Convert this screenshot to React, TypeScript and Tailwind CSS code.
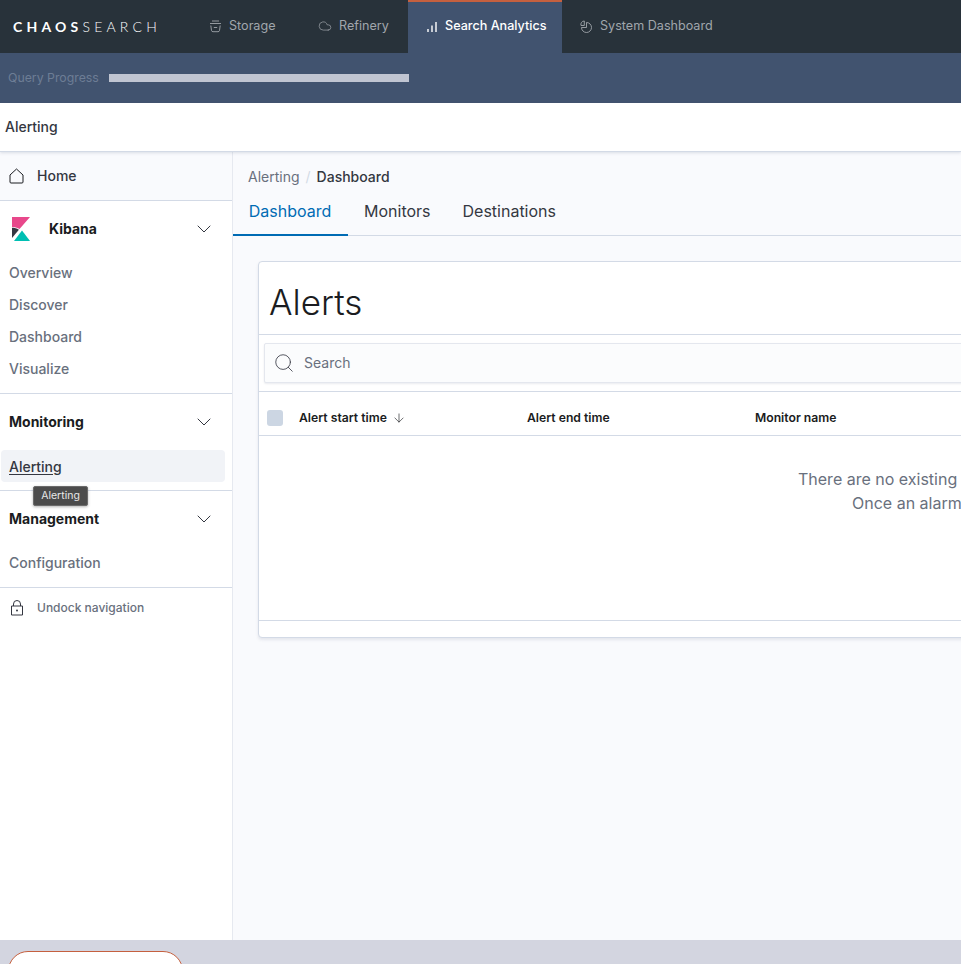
import type { ReactNode } from 'react';
import { ChevronDown, ArrowDown, Search, Cloud } from 'lucide-react';

function NavTab({ icon, label, active }: { icon: ReactNode; label: string; active?: boolean }) {
  return (
    <div
      className={`flex h-full items-center gap-[7px] text-[12.6px] ${
        active ? 'border-t-2 border-[#c5603f] bg-[#41536f] pb-[2px] font-medium text-white' : 'text-[#a0a6ac]'
      }`}
    >
      {icon}
      <span>{label}</span>
    </div>
  );
}

function Chevron() {
  return <ChevronDown className="h-6 w-6 text-[#343741]" strokeWidth={1} />;
}

function SideHeader({ label }: { label: string }) {
  return (
    <div className="flex h-[21px] items-center justify-between pl-[9px] pr-[16px] text-[14px] font-bold text-[#1a1c21]">
      <span>{label}</span>
      <Chevron />
    </div>
  );
}

function SideLink({ label }: { label: string }) {
  return <div className="flex h-8 items-center pl-[9px] text-[14px] font-medium text-[#69707d]">{label}</div>;
}

export default function App() {
  return (
    <div className="flex h-[964px] w-[961px] flex-col overflow-hidden bg-white font-['Inter',sans-serif]">
      <header className="h-[53px] shrink-0 bg-[#28323a]">
        <div className="flex h-full items-center">
          <div className="ml-[13px] w-[196px] whitespace-nowrap font-['Lato',sans-serif] text-[14px] tracking-[4.2px] text-white">
            <span className="font-bold">CHAOS</span>
            <span className="font-light">SEARCH</span>
          </div>
          <div className="w-[109px]">
            <NavTab
              label="Storage"
              icon={
                <svg width="13" height="13" viewBox="0 0 13 13" fill="none" stroke="currentColor" strokeWidth="0.9">
                  <path d="M3 1h7M1 3.5h11M1.8 5.5l.7 5a1.5 1.5 0 0 0 1.5 1.2h5a1.5 1.5 0 0 0 1.5-1.2l.7-5M4.8 7.5h3.4" />
                </svg>
              }
            />
          </div>
          <div className="w-[90px]">
            <NavTab label="Refinery" icon={<Cloud className="h-[14px] w-[14px]" strokeWidth={1.2} />} />
          </div>
          <div className="w-[154px] self-stretch">
            <NavTab
              active
              label="Search Analytics"
              icon={
                <span className="ml-[18px] flex h-[13px] w-[12px] items-center">
                  <svg width="12" height="13" viewBox="0 0 12 13" fill="none" stroke="currentColor" strokeWidth="1.4">
                    <path d="M2 12V9M6 12V5.5M10 12V2" />
                  </svg>
                </span>
              }
            />
          </div>
          <div className="ml-[18px]">
            <NavTab
              label="System Dashboard"
              icon={
                <svg width="13" height="13" viewBox="0 0 13 13" fill="none" stroke="currentColor" strokeWidth="0.9">
                  <path d="M6.5 2.5A5 5 0 1 1 1.5 7.5H6.5Z" />
                  <path d="M4.3 5.5H1A3.5 3.5 0 0 1 4.3 1Z" />
                </svg>
              }
            />
          </div>
        </div>
      </header>

      <div className="flex h-[50px] shrink-0 items-center bg-[#41536f] pl-2">
        <span className="w-[101px] text-[12.3px] text-[#6d7d95]">Query Progress</span>
        <div className="h-2 w-[300px] bg-[#c0c5d2]" />
      </div>

      <div className="z-10 flex h-[49px] shrink-0 items-center border-b border-[#d3dae6] bg-white pb-[2px] pl-[5px] text-[14px] font-medium text-[#343741] shadow-[0_1px_3px_rgba(80,90,120,0.18)]">
        Alerting
      </div>

      <div className="flex min-h-0 flex-1">
        <aside className="relative w-[233px] shrink-0 border-r border-[#e6e9f0] bg-white">
          <div className="flex h-[49px] items-center gap-[13px] border-b border-[#d3dae6] bg-[#f9fafd] pb-[1px] pl-[9px] text-[14px] font-medium text-[#343741]">
            <svg width="15" height="16" viewBox="0 0 15 16" fill="none" stroke="#1a1c21" strokeWidth="1">
              <path d="M1 7l6.5-6L14 7v7a1 1 0 0 1-1 1H2a1 1 0 0 1-1-1z" />
            </svg>
            <span>Home</span>
          </div>

          <div className="flex h-[55px] items-center justify-between pl-3 pr-[16px]">
            <div className="flex items-center gap-[19px] text-[14px] font-bold text-[#1a1c21]">
              <svg width="18" height="24" viewBox="0 0 18 24">
                <path d="M0 0H18L7.5 12C5 10.5 2.5 10 0 10Z" fill="#e8488b" />
                <path d="M0 10.8C2.5 10.8 4.8 11.3 6.9 12.7L0 21Z" fill="#343741" />
                <path d="M2 24L10 13.5 18 24Z" fill="#00bfb3" />
              </svg>
              <span>Kibana</span>
            </div>
            <Chevron />
          </div>
          <SideLink label="Overview" />
          <SideLink label="Discover" />
          <SideLink label="Dashboard" />
          <SideLink label="Visualize" />

          <div className="mt-[9px] border-t border-[#d3dae6] pt-[17px]">
            <SideHeader label="Monitoring" />
          </div>
          <div className="mt-[18px] px-[1px]">
            <div className="flex h-8 w-[224px] items-center rounded bg-[#f1f3f7] pl-2 text-[14px] font-medium text-[#343741] underline underline-offset-2">
              Alerting
            </div>
          </div>
          <div className="mt-2 border-t border-[#d3dae6] pt-[17px]">
            <SideHeader label="Management" />
          </div>
          <div className="mt-[17px]">
            <SideLink label="Configuration" />
          </div>
          <div className="mt-[9px] flex h-[40px] items-center gap-[13px] border-t border-[#d3dae6] pl-[10px] text-[12px] font-medium text-[#69707d]">
            <svg width="14" height="16" viewBox="0 0 14 16" fill="none" stroke="#343741" strokeWidth="1">
              <path d="M3.5 6V4a3.5 3.5 0 0 1 7 0v2M1.5 6h11v9h-11z" />
              <circle cx="7" cy="10.5" r="1" fill="#343741" stroke="none" />
            </svg>
            <span>Undock navigation</span>
          </div>

          <div className="absolute left-[33px] top-[334px] flex h-[20px] w-[55px] items-center justify-center rounded-[2px] border border-[#6a6a6a] bg-[#4b4b4b] text-[10.5px] text-[#e8e8e8] shadow-[0_1px_3px_rgba(0,0,0,0.3)]">
            Alerting
          </div>
        </aside>

        <main className="min-w-0 flex-1 bg-[#f9fafd]">
          <div className="flex h-[51px] items-end pb-[16px] pl-[15px] text-[14px] leading-[20px]">
            <span className="text-[#69707d]">Alerting</span>
            <span className="mx-[6px] text-[#d3dae6]">/</span>
            <span className="font-medium text-[#343741]">Dashboard</span>
          </div>
          <div className="-mt-[2px] flex h-[35px] items-start border-b border-[#d3dae6] text-[16px] leading-[20px] text-[#343741]">
            <div className="flex h-[35px] w-[115px] justify-center border-b-2 border-[#006bb4] pr-[1px] text-[#006bb4]">
              Dashboard
            </div>
            <div className="ml-4">Monitors</div>
            <div className="ml-8">Destinations</div>
          </div>

          <div className="ml-[25px] mt-[25px] h-[377px] w-[900px] rounded-[4px] border border-[#d3dae6] bg-white shadow-[0_2px_3px_rgba(80,90,120,0.12)]">
            <div className="flex h-[73px] items-center border-b border-[#d3dae6] pl-[10px] pt-[9px] text-[35px] font-light text-[#1a1c21]">
              Alerts
            </div>
            <div className="h-[57px] border-b border-[#d3dae6] px-[5px] pt-[8px]">
              <div className="flex h-[40px] items-center gap-[9px] rounded-[2px] border border-[#e4e7ee] bg-[#fbfcfd] pb-[1px] pl-[8px] text-[14px] text-[#69707d] shadow-[0_1px_2px_rgba(80,90,120,0.12)]">
                <Search className="h-[22px] w-[22px] text-[#343741]" strokeWidth={0.9} />
                <span>Search</span>
              </div>
            </div>
            <div className="flex h-[44px] items-center border-b border-[#d3dae6] pt-[9px] text-[12.2px] font-semibold text-[#1a1c21]">
              <div className="ml-2 h-4 w-4 rounded-[3px] bg-[#ccd6e3]" />
              <div className="ml-4 flex w-[228px] items-center gap-[5px]">
                Alert start time
                <ArrowDown className="h-[14px] w-[14px]" strokeWidth={1.1} />
              </div>
              <div className="w-[228px]">Alert end time</div>
              <div>Monitor name</div>
            </div>
            <div className="h-[185px] overflow-hidden whitespace-nowrap border-b border-[#d3dae6] pt-[31px] text-[16px] leading-[24px] text-[#69707d]">
              <div className="ml-[539px]">There are no existing alerts.</div>
              <div className="ml-[593px]">Once an alarm is triggered</div>
            </div>
          </div>
        </main>
      </div>

      <footer className="h-[24px] shrink-0 overflow-hidden bg-[#d3d5e0] pl-2 pt-[11px]">
        <div className="h-10 w-[175px] rounded-[20px] border border-[#c5603f] bg-white" />
      </footer>
    </div>
  );
}
